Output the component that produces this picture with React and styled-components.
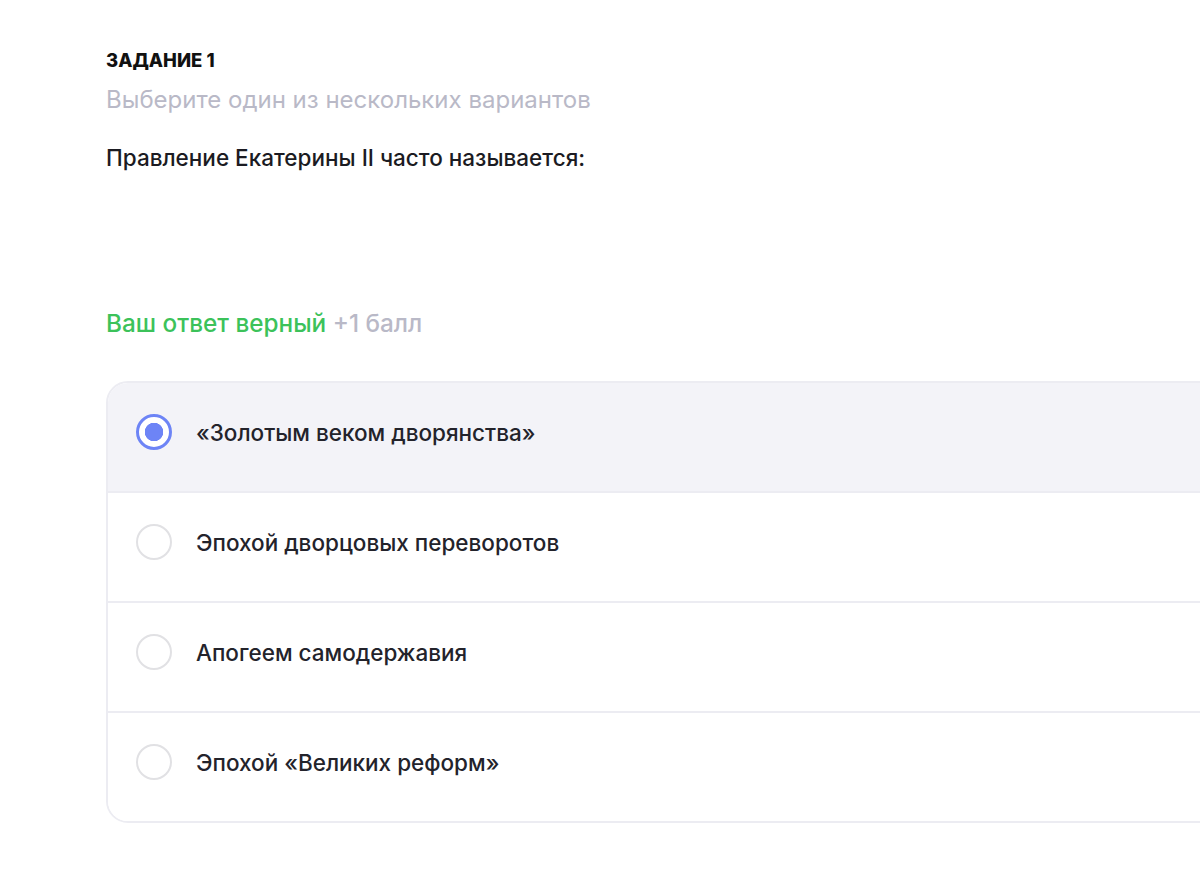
import { useState } from "react"
import styled, { createGlobalStyle } from "styled-components"

const GlobalStyle = createGlobalStyle`
    body {
        margin: 0;
        background: #ffffff;
        font-family: Inter, "Noto Sans", sans-serif;
        overflow: hidden;
    }
`

const options = [
    "«Золотым веком дворянства»",
    "Эпохой дворцовых переворотов",
    "Апогеем самодержавия",
    "Эпохой «Великих реформ»",
]

export default function App() {
    const [selected, setSelected] = useState(0)

    return (
        <>
            <GlobalStyle />
            <Page>
                <TaskLabel>ЗАДАНИЕ 1</TaskLabel>
                <Hint>Выберите один из нескольких вариантов</Hint>
                <Question>Правление Екатерины II часто называется:</Question>
                <Result>
                    <span>Ваш ответ верный</span> +1 балл
                </Result>
                <OptionList>
                    {options.map((text, i) => (
                        <Option key={i} active={selected === i} onClick={() => setSelected(i)}>
                            <Radio active={selected === i} />
                            <OptionText>{text}</OptionText>
                        </Option>
                    ))}
                </OptionList>
            </Page>
        </>
    )
}

const Page = styled.main`
    display: flex;
    flex-direction: column;
    padding: 47px 0 0 106px;
    width: 1300px;
`

const TaskLabel = styled.h4`
    margin: 0;
    font-size: 18.5px;
    font-weight: 800;
    color: #111111;
    line-height: 26px;
`

const Hint = styled.p`
    margin: 12px 0 0;
    font-size: 24px;
    line-height: 30px;
    color: #b9b9c7;
`

const Question = styled.p`
    margin: 28px 0 0;
    font-size: 22.5px;
    font-weight: 500;
    line-height: 30px;
    color: #1b1b22;
`

const Result = styled.p`
    margin: 135px 0 0;
    font-size: 24.3px;
    font-weight: 500;
    line-height: 30px;
    color: #b9b9c7;
    span {
        color: #3cc25a;
    }
`

const OptionList = styled.section`
    margin-top: 43px;
    display: flex;
    flex-direction: column;
    border: 2px solid #ececf2;
    border-radius: 22px;
    overflow: hidden;
`

const Option = styled.div`
    box-sizing: border-box;
    display: flex;
    align-items: center;
    gap: 24px;
    height: 108px;
    padding: 0 28px 10px;
    background: ${(props) => (props.active ? "#f3f3f8" : "#ffffff")};
    cursor: pointer;
    &:not(:last-child) {
        height: 110px;
        border-bottom: 2px solid #ececf2;
    }
`

const Radio = styled.span`
    box-sizing: border-box;
    width: 36px;
    height: 36px;
    border-radius: 50%;
    flex-shrink: 0;
    border: ${(props) => (props.active ? "3px solid #6d84f6" : "2.5px solid #e1e1e4")};
    background: ${(props) => (props.active ? "radial-gradient(circle, #6d84f6 0 9px, #ffffff 9.5px)" : "#ffffff")};
`

const OptionText = styled.span`
    font-size: 22.5px;
    font-weight: 500;
    color: #23232b;
`
